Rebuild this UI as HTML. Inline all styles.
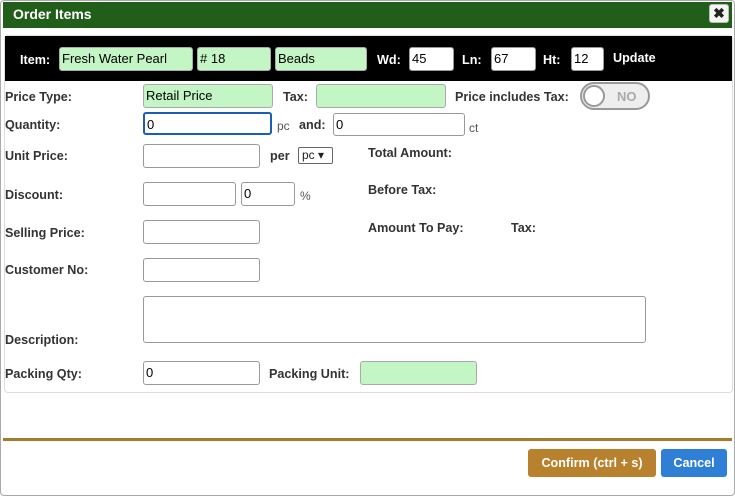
<!DOCTYPE html>
<html><head><style>
*{box-sizing:border-box;margin:0;padding:0}
body{width:735px;height:496px;background:#fff;font-family:"Liberation Sans",sans-serif;font-size:12px;color:#222;position:relative;overflow:hidden}
.a{position:absolute}
.b{font-weight:bold}
.in{position:absolute;border:1px solid #999;border-radius:3px;background:#fff;font-size:13px;padding:2px 2px;height:24px;line-height:18px;color:#000}
.g{background:#c3f5c5;border-color:#aaa}
.lbl{position:absolute;font-weight:bold;font-size:12.6px;color:#333}
.w{color:#fff}
</style></head><body>
<div class="a" style="left:0;top:0;width:735px;height:496px;border:1px solid #aaa;border-radius:4px"></div>
<div class="a" style="left:3px;top:2px;width:729px;height:26px;background:#215e19"></div>
<div class="a b w" style="left:13px;top:6px;font-size:14px">Order Items</div>
<div class="a" style="left:709px;top:4px;width:20px;height:19px;background:#f4f4f4;border:1px solid #bbb;border-radius:3px;text-align:center;font-size:14px;font-weight:bold;line-height:17px">✖</div>
<div class="a" style="left:4px;top:35px;width:729px;height:358px;border:1px solid #ddd;border-radius:4px"></div>
<div class="a" style="left:5px;top:36px;width:727px;height:45px;background:#000"></div>
<div class="lbl w" style="left:20px;top:53px">Item:</div>
<div class="in g" style="left:59px;top:47px;width:134px;height:24px">Fresh Water Pearl</div>
<div class="in g" style="left:197px;top:47px;width:74px">#&nbsp;18</div>
<div class="in g" style="left:275px;top:47px;width:92px">Beads</div>
<div class="lbl w" style="left:377px;top:53px">Wd:</div>
<div class="in" style="left:409px;top:47px;width:45px">45</div>
<div class="lbl w" style="left:462px;top:53px">Ln:</div>
<div class="in" style="left:491px;top:47px;width:45px">67</div>
<div class="lbl w" style="left:543px;top:53px">Ht:</div>
<div class="in" style="left:571px;top:47px;width:33px">12</div>
<div class="lbl w" style="left:613px;top:51px">Update</div>

<div class="lbl" style="left:5px;top:90px">Price Type:</div>
<div class="in g" style="left:143px;top:84px;width:130px">Retail Price</div>
<div class="lbl" style="left:283px;top:90px">Tax:</div>
<div class="in g" style="left:316px;top:84px;width:130px"></div>
<div class="lbl" style="left:455px;top:90px">Price includes Tax:</div>
<div class="a" style="left:580px;top:82px;width:70px;height:28px;border:2px solid #999;border-radius:14px;background:#eee"></div>
<div class="a" style="left:583px;top:85px;width:22px;height:22px;border:2px solid #999;border-radius:50%;background:#fff"></div>
<div class="a b" style="left:617px;top:89px;color:#aaa;font-size:13px">NO</div>

<div class="lbl" style="left:5px;top:118px">Quantity:</div>
<div class="in" style="left:143px;top:112px;width:129px;height:23px;border:2px solid #1a5fb4">0</div>
<div class="a" style="left:277px;top:119px;color:#555">pc</div>
<div class="lbl" style="left:299px;top:118px">and:</div>
<div class="in" style="left:333px;top:113px;width:132px;height:23px">0</div>
<div class="a" style="left:469px;top:121px;color:#555">ct</div>

<div class="lbl" style="left:5px;top:149px">Unit Price:</div>
<div class="in" style="left:143px;top:144px;width:117px"></div>
<div class="lbl" style="left:270px;top:149px">per</div>
<div class="a" style="left:298px;top:147px;width:35px;height:17px;border:1px solid #666;border-radius:2px;font-size:12px;padding-left:3px;line-height:15px">pc ▾</div>
<div class="lbl" style="left:368px;top:146px">Total Amount:</div>

<div class="lbl" style="left:5px;top:188px">Discount:</div>
<div class="in" style="left:143px;top:182px;width:93px"></div>
<div class="in" style="left:241px;top:182px;width:54px">0</div>
<div class="a" style="left:300px;top:189px;color:#555">%</div>
<div class="lbl" style="left:368px;top:183px">Before Tax:</div>

<div class="lbl" style="left:5px;top:226px">Selling Price:</div>
<div class="in" style="left:143px;top:220px;width:117px"></div>
<div class="lbl" style="left:368px;top:221px">Amount To Pay:</div>
<div class="lbl" style="left:511px;top:221px">Tax:</div>

<div class="lbl" style="left:5px;top:263px">Customer No:</div>
<div class="in" style="left:143px;top:258px;width:117px"></div>

<div class="in" style="left:143px;top:296px;width:503px;height:47px"></div>
<div class="lbl" style="left:5px;top:333px">Description:</div>

<div class="lbl" style="left:5px;top:367px">Packing Qty:</div>
<div class="in" style="left:143px;top:361px;width:117px">0</div>
<div class="lbl" style="left:269px;top:367px">Packing Unit:</div>
<div class="in g" style="left:360px;top:361px;width:117px"></div>

<div class="a" style="left:3px;top:438px;width:729px;height:3px;background:#a67c2a"></div>
<div class="a b w" style="left:528px;top:449px;width:128px;height:28px;background:#b8812e;border-radius:3px;text-align:center;line-height:28px;font-size:12.6px">Confirm (ctrl + s)</div>
<div class="a b w" style="left:661px;top:449px;width:66px;height:28px;background:#2f7fd6;border-radius:3px;text-align:center;line-height:28px;font-size:12.6px">Cancel</div>
</body></html>
